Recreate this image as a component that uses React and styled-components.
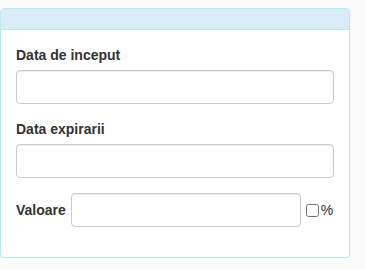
import styled, { createGlobalStyle } from "styled-components";

const Global = createGlobalStyle`
  body {
    margin: 0;
    padding-top: 8px;
    background: #f9f9f9;
    font-family: "Liberation Sans", Arial, sans-serif;
    font-size: 14px;
    line-height: 20px;
    color: #333;
  }
  * { box-sizing: border-box; }
`;

export default function App() {
  return (
    <>
      <Global />
      <Panel>
        <Heading />
        <Body>
          <Group>
            <Label>Data de inceput</Label>
            <Input type="text" />
          </Group>
          <Group>
            <Label>Data expirarii</Label>
            <Input type="text" />
          </Group>
          <InlineGroup>
            <InlineLabel>Valoare</InlineLabel>
            <ValueInput type="text" />
            <Check type="checkbox" />
            <Percent>%</Percent>
          </InlineGroup>
        </Body>
      </Panel>
    </>
  );
}

const Panel = styled.div`
  width: 350px;
  background: #fff;
  border: 1px solid #bce8f1;
  border-radius: 4px;
  box-shadow: 0 1px 1px rgba(0, 0, 0, 0.05);
`;
const Heading = styled.div`
  height: 21px;
  background: #d9edf7;
  border-bottom: 1px solid #bce8f1;
  border-radius: 3px 3px 0 0;
`;
const Body = styled.div`
  padding: 15px;
`;
const Group = styled.div`
  margin-bottom: 15px;
`;
const Label = styled.label`
  display: block;
  font-weight: bold;
  margin-bottom: 5px;
`;
const Input = styled.input`
  display: block;
  width: 100%;
  height: 34px;
  border: 1px solid #ccc;
  border-radius: 4px;
  box-shadow: inset 0 1px 1px rgba(0, 0, 0, 0.075);
  background: #fff;
`;
const InlineGroup = styled.div`
  display: flex;
  align-items: center;
  margin-bottom: 15px;
`;
const InlineLabel = styled.label`
  font-weight: bold;
  margin-right: 5px;
`;
const ValueInput = styled(Input)`
  width: 230px;
`;
const Check = styled.input`
  width: 13px;
  height: 13px;
  margin: 0 2px 0 5px;
`;
const Percent = styled.span`
  font-size: 14px;
`;
